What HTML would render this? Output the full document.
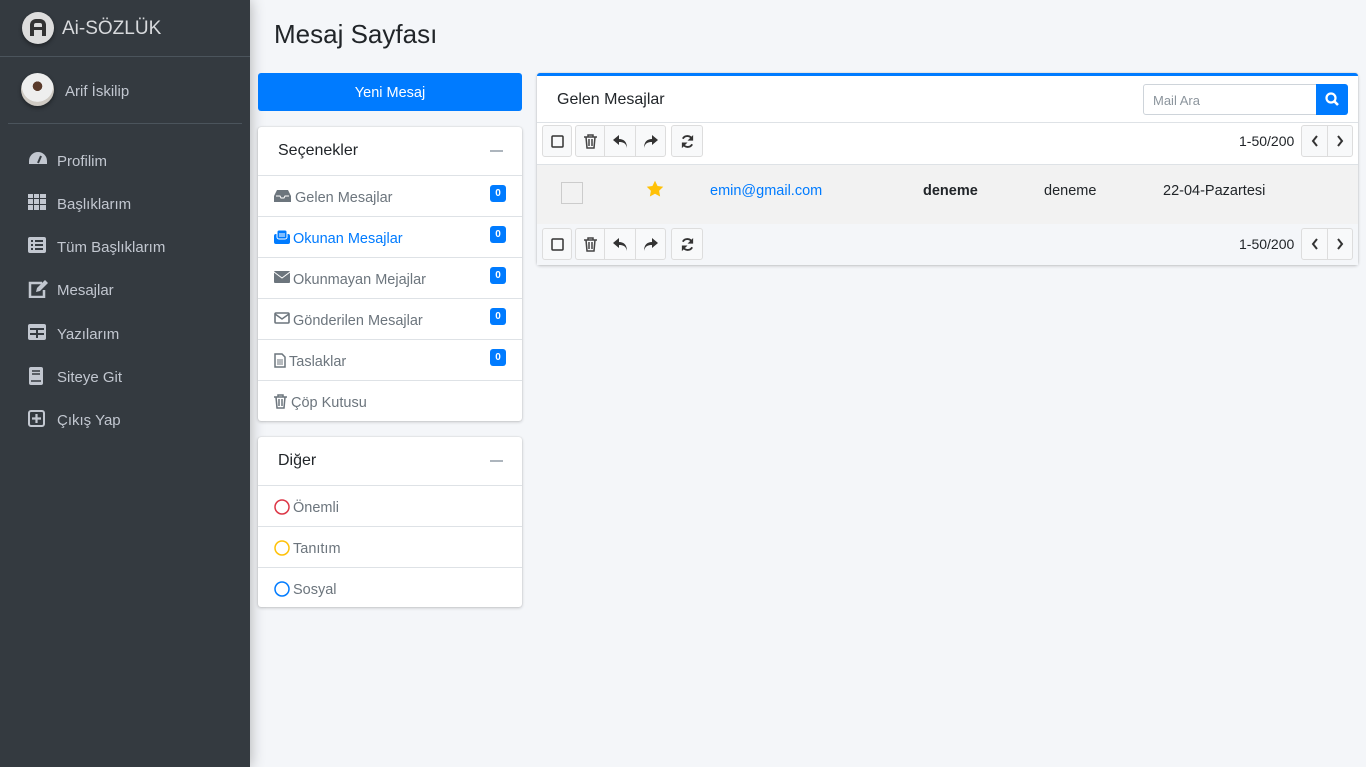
<!DOCTYPE html>
<html><head><meta charset="utf-8"><style>
*{box-sizing:border-box;margin:0;padding:0}
body{width:1366px;height:767px;background:#f4f6f9;font-family:"Liberation Sans",sans-serif;position:relative;overflow:hidden;color:#212529}
.a{position:absolute}
.sb{left:0;top:0;width:250px;height:767px;background:#343a40;box-shadow:0 0 14px rgba(0,0,0,.3)}
.nav{left:28px;color:#c2c7d0;font-size:15px}
.nav .t{position:absolute;left:29px;top:2px;white-space:nowrap}
.card{background:#fff;border-radius:3px;box-shadow:0 0 1px rgba(0,0,0,.2),0 1px 3px rgba(0,0,0,.2)}
.li{position:absolute;left:0;width:264px;height:41px;border-top:1px solid #dee2e6;font-size:14.5px;color:#6c757d}
.li span{position:absolute;left:35px;top:14px}
.li svg{position:absolute;left:16px;top:13px}
.bd{position:absolute;right:16px;top:9px;width:16px;height:17px;background:#007bff;color:#fff;border-radius:3px;font-size:10px;font-weight:bold;text-align:center;line-height:17px}
.btn{position:absolute;top:0;height:32px;background:#f8f9fa;border:1px solid #ddd;border-radius:3px;display:flex;align-items:center;justify-content:center}
</style></head><body>
<div class="a sb">
 <div class="a" style="left:22px;top:12px;width:32px;height:32px;border-radius:50%;background:#ddd;box-shadow:0 2px 4px rgba(0,0,0,.4)"><div class="a" style="left:8px;top:7px;width:16px;height:17px;border:4px solid #333;border-bottom:none;border-radius:6px 6px 0 0"></div><div class="a" style="left:11px;top:15px;width:10px;height:3px;background:#333"></div></div>
 <div class="a" style="left:62px;top:18px;color:#d8dadd;font-size:19px">Ai-SÖZLÜK</div>
 <div class="a" style="left:0;top:56px;width:250px;height:1px;background:#4b545c"></div>
 <div class="a" style="left:21px;top:73px;width:33px;height:33px;border-radius:50%;background:radial-gradient(circle at 50% 40%,#5a3a2a 0 18%,#eee 19% 60%,#cfcac3 61%);box-shadow:0 2px 4px rgba(0,0,0,.4)"></div>
 <div class="a" style="left:65px;top:83px;color:#c2c7d0;font-size:15px">Arif İskilip</div>
 <div class="a" style="left:8px;top:123px;width:234px;height:1px;background:#4b545c"></div>
 <div class="a nav" style="top:151px"><svg width="20" height="16" viewBox="0 0 20 16"><path d="M10 1A9 9 0 0 0 1 10v3h18v-3A9 9 0 0 0 10 1z" fill="#c2c7d0"/><path d="M10 12l3-7" stroke="#343a40" stroke-width="2"/></svg><span class="t">Profilim</span></div>
 <div class="a nav" style="top:194px"><svg width="18" height="16" viewBox="0 0 18 16" fill="#c2c7d0"><rect x="0" y="0" width="5" height="4"/><rect x="6" y="0" width="5" height="4"/><rect x="12" y="0" width="6" height="4"/><rect x="0" y="5" width="5" height="5"/><rect x="6" y="5" width="5" height="5"/><rect x="12" y="5" width="6" height="5"/><rect x="0" y="11" width="5" height="5"/><rect x="6" y="11" width="5" height="5"/><rect x="12" y="11" width="6" height="5"/></svg><span class="t">Başlıklarım</span></div>
 <div class="a nav" style="top:237px"><svg width="18" height="16" viewBox="0 0 18 16"><rect width="18" height="16" rx="2" fill="#c2c7d0"/><path d="M3 4h2M7 4h8M3 8h2M7 8h8M3 12h2M7 12h8" stroke="#343a40" stroke-width="2"/></svg><span class="t">Tüm Başlıklarım</span></div>
 <div class="a nav" style="top:280px"><svg width="20" height="18" viewBox="0 0 20 18"><path d="M14 3H2v14h14V10" stroke="#c2c7d0" stroke-width="2.5" fill="none"/><path d="M8 12l1-4 8-8 3 3-8 8z" fill="#c2c7d0"/></svg><span class="t">Mesajlar</span></div>
 <div class="a nav" style="top:324px"><svg width="18" height="16" viewBox="0 0 18 16"><rect width="18" height="16" rx="2" fill="#c2c7d0"/><path d="M2 5h14M9 5v9M2 10h14" stroke="#343a40" stroke-width="2"/></svg><span class="t">Yazılarım</span></div>
 <div class="a nav" style="top:367px"><svg width="16" height="18" viewBox="0 0 16 18"><rect x="1" width="14" height="18" rx="2" fill="#c2c7d0"/><path d="M4 4h8M4 7h8M3 14h10" stroke="#343a40" stroke-width="1.5"/></svg><span class="t">Siteye Git</span></div>
 <div class="a nav" style="top:410px"><svg width="17" height="17" viewBox="0 0 17 17"><rect x="1" y="1" width="15" height="15" rx="2" stroke="#c2c7d0" stroke-width="2" fill="none"/><path d="M8.5 4v9M4 8.5h9" stroke="#c2c7d0" stroke-width="2.2"/></svg><span class="t">Çıkış Yap</span></div>
</div>

<div class="a" style="left:274px;top:19px;font-size:26px;color:#212529">Mesaj Sayfası</div>
<div class="a" style="left:258px;top:73px;width:264px;height:38px;background:#007bff;border-radius:3px;color:#fff;font-size:14.5px;text-align:center;line-height:40px">Yeni Mesaj</div>

<div class="a card" style="left:258px;top:127px;width:264px;height:294px">
 <div class="a" style="left:20px;top:15px;font-size:16px">Seçenekler</div>
 <div class="a" style="left:232px;top:23px;width:13px;height:2px;background:#adb5bd"></div>
 <div class="li" style="top:48px"><svg width="17" height="13" viewBox="0 0 17 13"><path d="M3 1h11l3 6v6H0V7z" fill="#6c757d"/><path d="M2 7h4l1 2h3l1-2h4" stroke="#fff" fill="none"/></svg><span style="left:37px">Gelen Mesajlar</span><div class="bd">0</div></div>
 <div class="li" style="top:89px;color:#007bff"><svg width="16" height="14" viewBox="0 0 16 14"><rect x="0" y="4" width="16" height="10" rx="2" fill="#007bff"/><rect x="3" y="0" width="10" height="9" rx="2" fill="#007bff" stroke="#fff"/><path d="M5 4h6M5 6h6" stroke="#fff"/></svg><span>Okunan Mesajlar</span><div class="bd">0</div></div>
 <div class="li" style="top:130px"><svg width="16" height="12" viewBox="0 0 16 12"><rect width="16" height="12" rx="1" fill="#6c757d"/><path d="M0 1l8 6 8-6" stroke="#fff" fill="none"/></svg><span>Okunmayan Mejajlar</span><div class="bd">0</div></div>
 <div class="li" style="top:171px"><svg width="16" height="12" viewBox="0 0 16 12"><rect x="1" y="1" width="14" height="10" rx="1" stroke="#6c757d" stroke-width="1.6" fill="none"/><path d="M1 2l7 5 7-5" stroke="#6c757d" stroke-width="1.5" fill="none"/></svg><span>Gönderilen Mesajlar</span><div class="bd">0</div></div>
 <div class="li" style="top:212px"><svg width="12" height="15" viewBox="0 0 12 15"><path d="M1 1h7l3 3v10H1z" stroke="#6c757d" stroke-width="1.5" fill="none"/><path d="M3 7h6M3 9h6M3 11h6" stroke="#6c757d"/></svg><span style="left:31px">Taslaklar</span><div class="bd">0</div></div>
 <div class="li" style="top:253px"><svg width="13" height="15" viewBox="0 0 13 15"><path d="M0 3h13M4 3V1h5v2M2 3l1 11h7l1-11M5 5v7M8 5v7" stroke="#6c757d" stroke-width="1.5" fill="none"/></svg><span style="left:33px">Çöp Kutusu</span></div>
</div>

<div class="a card" style="left:258px;top:437px;width:264px;height:170px">
 <div class="a" style="left:20px;top:15px;font-size:16px">Diğer</div>
 <div class="a" style="left:232px;top:23px;width:13px;height:2px;background:#adb5bd"></div>
 <div class="li" style="top:48px"><svg width="16" height="16"><circle cx="8" cy="8" r="7" stroke="#dc3545" stroke-width="1.5" fill="none"/></svg><span>Önemli</span></div>
 <div class="li" style="top:89px"><svg width="16" height="16"><circle cx="8" cy="8" r="7" stroke="#ffc107" stroke-width="1.5" fill="none"/></svg><span>Tanıtım</span></div>
 <div class="li" style="top:130px"><svg width="16" height="16"><circle cx="8" cy="8" r="7" stroke="#007bff" stroke-width="1.5" fill="none"/></svg><span>Sosyal</span></div>
</div>

<div class="a card" style="left:537px;top:73px;width:821px;height:192px;border-top:3px solid #007bff">
 <div class="a" style="left:20px;top:15px;font-size:16px">Gelen Mesajlar</div>
 <div class="a" style="left:606px;top:8px;width:174px;height:31px;border:1px solid #ced4da;border-radius:3px 0 0 3px;font-size:13px;color:#8c959d;padding:8px 9px">Mail Ara</div>
 <div class="a" style="left:779px;top:8px;width:32px;height:31px;background:#007bff;border-radius:0 3px 3px 0"><svg width="32" height="31" viewBox="0 0 32 31"><circle cx="15" cy="14" r="4.5" stroke="#fff" stroke-width="2.2" fill="none"/><path d="M18 17l4 4" stroke="#fff" stroke-width="2.6"/></svg></div>
 <div class="a" style="left:0;top:46px;width:821px;height:1px;background:#dee2e6"></div>
 <div class="a" style="left:0;top:88px;width:821px;height:60px;background:#f2f2f2;border-top:1px solid #dee2e6"></div>
 <div class="a" style="left:24px;top:106px;width:22px;height:22px;border:1px solid #ccc;background:#f2f2f2"></div>
 <svg class="a" style="left:109px;top:104px" width="18" height="18" viewBox="0 0 24 24"><path d="M12 1l3.4 7 7.6 1-5.5 5.3 1.3 7.7L12 18.4 5.2 22l1.3-7.7L1 9l7.6-1z" fill="#ffc107"/></svg>
 <div class="a" style="left:173px;top:107px;font-size:14.5px;color:#007bff">emin@gmail.com</div>
 <div class="a" style="left:386px;top:107px;font-size:14.5px;font-weight:bold">deneme</div>
 <div class="a" style="left:507px;top:107px;font-size:14.5px">deneme</div>
 <div class="a" style="left:626px;top:107px;font-size:14.5px">22-04-Pazartesi</div>
 <div class="a" style="left:0;top:148px;width:821px;height:41px;background:#f4f6f9"></div>
</div>

<div class="a" style="left:542px;top:125px;width:811px;height:33px">
 <div class="btn" style="left:0;width:30px"><svg width="13" height="13"><rect x="1" y="1" width="11" height="11" rx="1" stroke="#333" stroke-width="1.5" fill="none"/></svg></div>
 <div class="btn" style="left:33px;width:30px;border-radius:3px 0 0 3px"><svg width="13" height="15" viewBox="0 0 13 15"><path d="M0 3h13M4 3V1h5v2M2 3l1 11h7l1-11M5 5v7M8 5v7" stroke="#444" stroke-width="1.5" fill="none"/></svg></div>
 <div class="btn" style="left:62px;width:32px;border-radius:0"><svg width="15" height="13" viewBox="0 0 15 13"><path d="M6 0L0 5l6 5V7c4 0 7 1 8 6 0-6-3-9-8-9z" fill="#333"/></svg></div>
 <div class="btn" style="left:93px;width:31px;border-radius:0 3px 3px 0"><svg width="15" height="13" viewBox="0 0 15 13"><path d="M9 0l6 5-6 5V7c-4 0-7 1-8 6 0-6 3-9 8-9z" fill="#333"/></svg></div>
 <div class="btn" style="left:129px;width:32px"><svg width="15" height="15" viewBox="0 0 16 16"><path d="M13 6A5.5 5.5 0 0 0 3 5M3 10a5.5 5.5 0 0 0 10 1" stroke="#333" stroke-width="2" fill="none"/><path d="M14 1v6H8zM2 15V9h6z" fill="#333"/></svg></div>
 <div class="a" style="left:697px;top:8px;font-size:14px">1-50/200</div>
 <div class="btn" style="left:759px;width:27px;border-radius:3px 0 0 3px"><svg width="8" height="12"><path d="M6 1L2 6l4 5" stroke="#333" stroke-width="2" fill="none"/></svg></div>
 <div class="btn" style="left:785px;width:26px;border-radius:0 3px 3px 0"><svg width="8" height="12"><path d="M2 1l4 5-4 5" stroke="#333" stroke-width="2" fill="none"/></svg></div>
</div>
<div class="a" style="left:542px;top:228px;width:811px;height:33px">
 <div class="btn" style="left:0;width:30px"><svg width="13" height="13"><rect x="1" y="1" width="11" height="11" rx="1" stroke="#333" stroke-width="1.5" fill="none"/></svg></div>
 <div class="btn" style="left:33px;width:30px;border-radius:3px 0 0 3px"><svg width="13" height="15" viewBox="0 0 13 15"><path d="M0 3h13M4 3V1h5v2M2 3l1 11h7l1-11M5 5v7M8 5v7" stroke="#444" stroke-width="1.5" fill="none"/></svg></div>
 <div class="btn" style="left:62px;width:32px;border-radius:0"><svg width="15" height="13" viewBox="0 0 15 13"><path d="M6 0L0 5l6 5V7c4 0 7 1 8 6 0-6-3-9-8-9z" fill="#333"/></svg></div>
 <div class="btn" style="left:93px;width:31px;border-radius:0 3px 3px 0"><svg width="15" height="13" viewBox="0 0 15 13"><path d="M9 0l6 5-6 5V7c-4 0-7 1-8 6 0-6 3-9 8-9z" fill="#333"/></svg></div>
 <div class="btn" style="left:129px;width:32px"><svg width="15" height="15" viewBox="0 0 16 16"><path d="M13 6A5.5 5.5 0 0 0 3 5M3 10a5.5 5.5 0 0 0 10 1" stroke="#333" stroke-width="2" fill="none"/><path d="M14 1v6H8zM2 15V9h6z" fill="#333"/></svg></div>
 <div class="a" style="left:697px;top:8px;font-size:14px">1-50/200</div>
 <div class="btn" style="left:759px;width:27px;border-radius:3px 0 0 3px"><svg width="8" height="12"><path d="M6 1L2 6l4 5" stroke="#333" stroke-width="2" fill="none"/></svg></div>
 <div class="btn" style="left:785px;width:26px;border-radius:0 3px 3px 0"><svg width="8" height="12"><path d="M2 1l4 5-4 5" stroke="#333" stroke-width="2" fill="none"/></svg></div>
</div>
</body></html>
